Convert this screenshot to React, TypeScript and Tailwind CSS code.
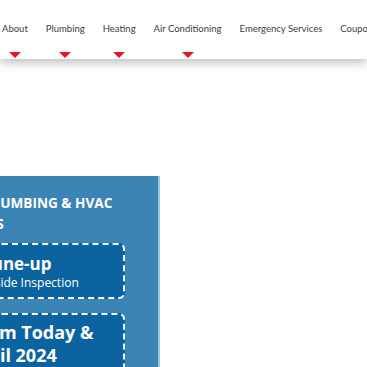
import React from 'react';

const navItems = [
  { label: 'About', drop: true },
  { label: 'Plumbing', drop: true },
  { label: 'Heating', drop: true },
  { label: 'Air Conditioning', drop: true },
  { label: 'Emergency Services', drop: false },
  { label: 'Coupons', drop: false },
];

function Caret() {
  return (
    <span className="mt-[17px] block h-0 w-0 border-x-[6.5px] border-t-[6px] border-x-transparent border-t-[#e3161c]" />
  );
}

export default function App() {
  return (
    <div className="h-[367px] w-[367px] overflow-hidden bg-white">
      <header className="relative z-10 h-[59px] bg-white shadow-[0_3px_10px_rgba(0,0,0,0.28)]">
        <nav className="flex gap-[18px] whitespace-nowrap pl-[2px] font-['Lato',sans-serif] text-[9.5px] leading-[12px] text-[#3d3d3d]">
          {navItems.map((item) => (
            <div key={item.label} className="flex flex-col items-center pt-[23px]">
              <span>{item.label}</span>
              {item.drop && <Caret />}
            </div>
          ))}
        </nav>
      </header>

      <section className="mt-[117px] h-[200px] w-[160px] border-r-2 border-[#9ec4dd] bg-[#3a85b5] font-['Open_Sans',sans-serif] text-white">
        <h2 className="whitespace-nowrap pt-[16px] text-[13.6px] font-bold leading-[21px]">
          <div className="-ml-[16px]">PLUMBING &amp; HVAC</div>
          <div className="-ml-[32px]">PROS</div>
        </h2>

        <div className="-ml-[4px] mr-[33px] mt-[9px] rounded-[6px] border-2 border-dashed border-white bg-[#0b63a0] pb-[7px] pl-[2px] pt-[8px] whitespace-nowrap">
          <div className="-ml-[91px] text-[17px] font-bold leading-[22px]">Furnace Tune-up</div>
          <div className="-ml-[54px] text-[12px] leading-[15px]">Free Outside Inspection</div>
        </div>

        <div className="-ml-[4px] mr-[33px] mt-[14px] rounded-[6px] border-2 border-dashed border-white bg-[#0b63a0] pb-[8px] pl-[2px] pt-[6px] whitespace-nowrap">
          <div className="-ml-[72px] text-[18px] font-bold leading-[23px]">Call Them Today &amp;</div>
          <div className="-ml-[81px] text-[18px] font-bold leading-[23px]">Until April 2024</div>
        </div>
      </section>
    </div>
  );
}
